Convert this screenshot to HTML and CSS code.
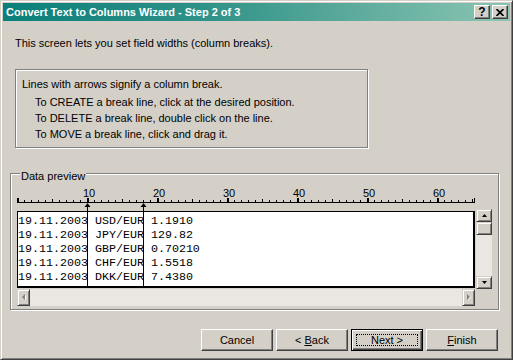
FILE: index.html
```html
<!DOCTYPE html>
<html lang="en">
<head>
    <meta charset="UTF-8">
    <title>Convert Text to Columns Wizard - Step 2 of 3</title>
    <link rel="stylesheet" href="styles.css">
</head>
<body>

<div class="window">
    <!-- Title bar -->
    <div class="titlebar">
        <span class="title">Convert Text to Columns Wizard - Step 2 of 3</span>
        <div class="caption-buttons">
            <button class="cap-btn help">?</button>
            <button class="cap-btn close">
                <svg width="8" height="7" viewBox="0 0 8 7"><path d="M0.5 0 L7.5 7 M7.5 0 L0.5 7" stroke="#000" stroke-width="1.7"/></svg>
            </button>
        </div>
    </div>

    <p class="intro">This screen lets you set field widths (column breaks).</p>

    <!-- Hint box -->
    <div class="hint-box">
        <p class="hint-lead">Lines with arrows signify a column break.</p>
        <p class="hint">To CREATE a break line, click at the desired position.</p>
        <p class="hint">To DELETE a break line, double click on the line.</p>
        <p class="hint">To MOVE a break line, click and drag it.</p>
    </div>

    <!-- Data preview -->
    <fieldset class="preview">
        <legend>Data preview</legend>
        <svg class="ruler" width="458" height="25" viewBox="0 0 458 25">
            <defs>
                <pattern id="tick1" width="7" height="25" patternUnits="userSpaceOnUse"><rect x="0" y="14" width="1" height="2"/></pattern>
                <pattern id="tick5" x="35" width="70" height="25" patternUnits="userSpaceOnUse"><rect x="0" y="13" width="1" height="3"/></pattern>
                <pattern id="tick10" width="70" height="25" patternUnits="userSpaceOnUse"><rect x="0" y="12" width="2" height="4"/></pattern>
            </defs>
            <rect width="458" height="25" fill="url(#tick1)"/>
            <rect width="458" height="25" fill="url(#tick5)"/>
            <rect width="458" height="25" fill="url(#tick10)"/>
            <rect x="0" y="16" width="458" height="1"/>
            <rect x="457" y="12" width="1" height="4"/>
            <text x="72" y="11">10</text>
            <text x="142" y="11">20</text>
            <text x="212" y="11">30</text>
            <text x="282" y="11">40</text>
            <text x="352" y="11">50</text>
            <text x="422" y="11">60</text>
            <polygon points="67.5,21 70.5,17 73.5,21"/>
            <rect x="70" y="20" width="1" height="5"/>
            <polygon points="123.5,21 126.5,17 129.5,21"/>
            <rect x="126" y="20" width="1" height="5"/>
        </svg>
        <div class="grid-row">
            <div class="grid">
<pre>19.11.2003 USD/EUR 1.1910
19.11.2003 JPY/EUR 129.82
19.11.2003 GBP/EUR 0.70210
19.11.2003 CHF/EUR 1.5518
19.11.2003 DKK/EUR 7.4380</pre>
                <span class="break b10"></span>
                <span class="break b18"></span>
            </div>
            <div class="vscroll">
                <div class="sb-btn">
                    <svg width="5" height="3" viewBox="0 0 5 3"><polygon points="0,3 2.5,0 5,3"/></svg>
                </div>
                <div class="sb-btn"></div>
                <div class="track"></div>
                <div class="sb-btn">
                    <svg width="5" height="3" viewBox="0 0 5 3"><polygon points="0,0 5,0 2.5,3"/></svg>
                </div>
            </div>
        </div>
        <div class="hscroll">
            <div class="sb-btn h">
                <svg width="4" height="7" viewBox="0 0 4 7"><polygon points="4,1 1,3.5 4,6" fill="#fff"/><polygon points="3,0 0,3 3,6" fill="#808080"/></svg>
            </div>
            <div class="sb-btn h">
                <svg width="4" height="7" viewBox="0 0 4 7"><polygon points="1,1 4,3.5 1,6" fill="#fff"/><polygon points="0,0 3,3 0,6" fill="#808080"/></svg>
            </div>
        </div>
    </fieldset>

    <!-- Wizard buttons -->
    <div class="buttons">
        <button class="btn">Cancel</button>
        <button class="btn">&lt; <u>B</u>ack</button>
        <button class="btn default">Next &gt;</button>
        <button class="btn"><u>F</u>inish</button>
    </div>
</div>

</body>
</html>
```

FILE: styles.css
```css
/* base */
body {
    margin: 0;
    background: #d4d0c8;
    font-family: "Liberation Sans", Arial, sans-serif;
    font-size: 11px;
    color: #000;
}

/* window frame */
.window {
    width: 513px;
    height: 360px;
    box-sizing: border-box;
    border: 1px solid;
    border-color: #d4d0c8 #404040 #404040 #d4d0c8;
    box-shadow: inset 1px 1px #fff, inset -1px -1px #808080;
    padding: 2px;
    background: #d4d0c8;
}

/* title bar */
.titlebar {
    height: 18px;
    display: flex;
    align-items: center;
    justify-content: space-between;
    padding: 0 2px 0 3px;
    background: linear-gradient(to right, #0b7f7a 0%, #2f9288 40%, #8cc5b2 100%);
}
.title {
    color: #fff;
    font-weight: bold;
    font-size: 11px;
    line-height: 18px;
}
.caption-buttons {
    display: flex;
    gap: 2px;
}
.cap-btn {
    width: 16px;
    height: 14px;
    box-sizing: border-box;
    padding: 0;
    border: 1px solid;
    border-color: #fff #404040 #404040 #fff;
    box-shadow: inset -1px -1px #808080;
    background: #d4d0c8;
    display: flex;
    align-items: center;
    justify-content: center;
    font: bold 12px "Liberation Sans", Arial, sans-serif;
    color: #000;
}

/* texts */
.intro {
    margin: 16px 0 0 12px;
    line-height: 13px;
}
.hint-box {
    margin: 19px 0 0 12px;
    width: 353px;
    height: 79px;
    box-sizing: border-box;
    border: 1px solid #808080;
    box-shadow: inset 1px 1px #fff, 1px 1px #fff;
    padding: 6px 0 0 6px;
}
.hint-lead {
    margin: 0 0 2px;
    line-height: 16px;
}
.hint {
    margin: 0 0 0 13px;
    line-height: 16px;
}

/* data preview group */
.preview {
    margin: 16px 0 0 7px;
    width: 489px;
    box-sizing: border-box;
    min-width: 0;
    padding: 3px 0 3px 6px;
    border: 1px solid #808080;
    box-shadow: inset 1px 1px #fff, 1px 1px #fff;
}
.preview legend {
    margin-left: 3px;
    padding: 6px 1px 0;
    line-height: 13px;
    background: #d4d0c8;
}
.ruler {
    display: block;
}
.ruler text {
    font: 11px "Liberation Sans", Arial, sans-serif;
    text-anchor: middle;
}

.grid-row {
    display: flex;
    align-items: flex-start;
}
.grid {
    position: relative;
    width: 458px;
    height: 77px;
    box-sizing: border-box;
    border: solid #000;
    border-width: 1px 2px 2px 1px;
    background: #fff;
    margin-right: 1px;
    overflow: hidden;
}
.grid pre {
    margin: 0;
    padding-top: 2px;
    font-family: "Liberation Mono", "Courier New", monospace;
    font-size: 11.67px;
    line-height: 14px;
}
.break {
    position: absolute;
    top: -1px;
    bottom: 0;
    width: 1px;
    background: #000;
}
.b10 { left: 69px; }
.b18 { left: 125px; }

/* scroll bars */
.vscroll {
    width: 16px;
    height: 80px;
    margin-top: -2px;
    display: flex;
    flex-direction: column;
    background: #eae7e2;
}
.vscroll .track {
    flex: 1;
}
.sb-btn {
    width: 16px;
    height: 13px;
    box-sizing: border-box;
    border: 1px solid;
    border-color: #d4d0c8 #404040 #404040 #d4d0c8;
    box-shadow: inset 1px 1px #fff, inset -1px -1px #808080;
    background: #d4d0c8;
    display: flex;
    align-items: center;
    justify-content: center;
}
.sb-btn svg {
    display: block;
}
.hscroll {
    width: 458px;
    height: 17px;
    display: flex;
    justify-content: space-between;
    background: #eae7e2;
}
.sb-btn.h {
    width: 13px;
    height: 17px;
}

/* wizard buttons */
.buttons {
    display: flex;
    justify-content: flex-end;
    gap: 3px;
    margin: 19px 12px 0 0;
}
.btn {
    position: relative;
    width: 72px;
    height: 22px;
    box-sizing: border-box;
    padding: 0;
    border: 1px solid;
    border-color: #fff #404040 #404040 #fff;
    box-shadow: inset -1px -1px #808080;
    background: #d4d0c8;
    font: 11px "Liberation Sans", Arial, sans-serif;
    color: #000;
}
.btn.default {
    border-color: #000;
    box-shadow: inset 1px 1px #fff, inset -1px -1px #404040, inset -2px -2px #808080;
}
.btn.default::after {
    content: "";
    position: absolute;
    top: 4px;
    left: 4px;
    right: 4px;
    bottom: 4px;
    border: 1px dotted #000;
}
```
